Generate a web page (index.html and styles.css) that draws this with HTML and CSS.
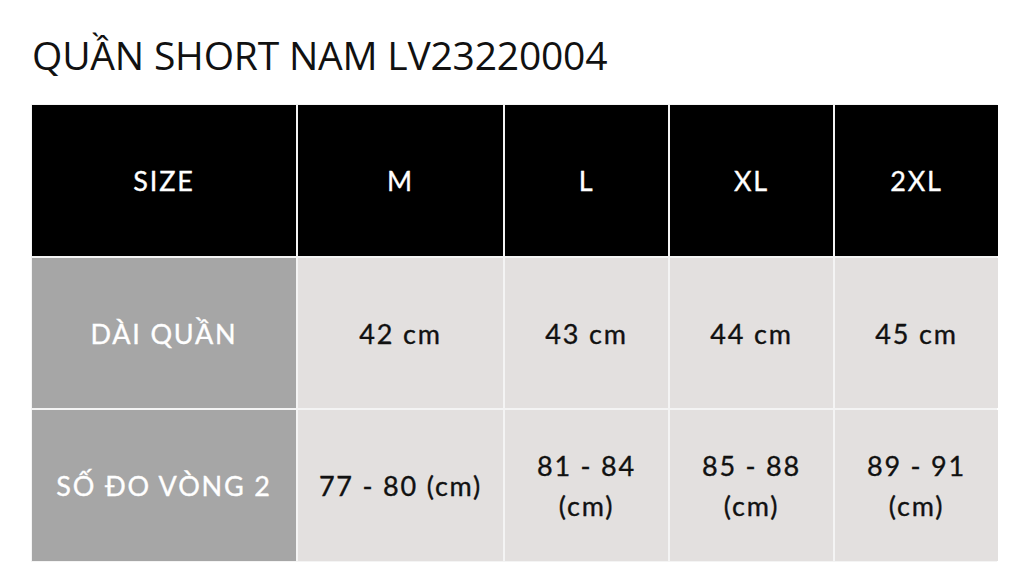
FILE: index.html
```html
<!DOCTYPE html>
<html lang="vi">
<head>
<meta charset="utf-8">
<title>Quần short nam LV23220004</title>
<link rel="stylesheet" href="styles.css">
</head>
<body>
<h1 class="title">QUẦN SHORT NAM LV23220004</h1>
<div class="table">
  <div class="cell head">SIZE</div>
  <div class="cell head">M</div>
  <div class="cell head">L</div>
  <div class="cell head">XL</div>
  <div class="cell head">2XL</div>

  <div class="cell label">DÀI QUẦN</div>
  <div class="cell val">42 cm</div>
  <div class="cell val">43 cm</div>
  <div class="cell val">44 cm</div>
  <div class="cell val">45 cm</div>

  <div class="cell label">SỐ ĐO VÒNG 2</div>
  <div class="cell val">77 - 80 (cm)</div>
  <div class="cell val">81 - 84<br>(cm)</div>
  <div class="cell val">85 - 88<br>(cm)</div>
  <div class="cell val">89 - 91<br>(cm)</div>
</div>
</body>
</html>
```
FILE: styles.css
```css
* { box-sizing: border-box; }
html, body { margin: 0; padding: 0; background: #ffffff; }
body {
  padding: 29px 27px 0 31px;
  font-family: "Open Sans", "Noto Sans", sans-serif;
}
.title {
  margin: 0 0 23px 1px;
  font-family: "Open Sans", "Noto Sans", sans-serif;
  font-weight: 400;
  font-size: 39px;
  line-height: 52px;
  color: #111111;
  letter-spacing: -0.2px;
}
.table {
  display: grid;
  grid-template-columns: 264px 205px 163px 163px 163px;
  grid-template-rows: 151px 150px 151px;
  gap: 2px;
  width: 966px;
  background: #f4f4f4;
  padding: 1px;
  font-family: "Lato", "Noto Sans", sans-serif;
  font-size: 27px;
  letter-spacing: 1.8px;
  -webkit-text-stroke: 0.35px currentColor;
}
.cell {
  display: flex;
  align-items: center;
  justify-content: center;
  text-align: center;
  line-height: 40px;
  padding-top: 1px;
}
.head { background: #000000; color: #ffffff; font-weight: 400; }
.label { background: #a6a6a6; color: #ffffff; }
.val { background: #e3e0df; color: #111111; }
```
